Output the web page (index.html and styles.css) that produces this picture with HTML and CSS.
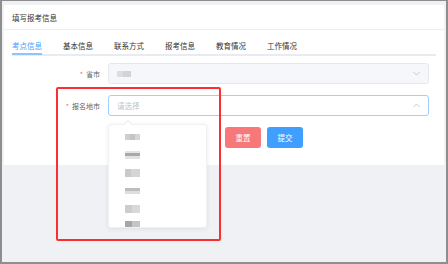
FILE: index.html
```
<!DOCTYPE html>
<html lang="zh-CN">
<head>
    <meta charset="UTF-8">
    <meta name="viewport" content="width=device-width, initial-scale=1.0">
    <title>填写报考信息</title>
    <link rel="stylesheet" href="styles.css">
</head>
<body>
    <div class="frame">
        <div class="card">
            <div class="card-title">填写报考信息</div>

            <!-- Tabs -->
            <div class="tabs">
                <span class="tab active">考点信息</span>
                <span class="tab">基本信息</span>
                <span class="tab">联系方式</span>
                <span class="tab">报考信息</span>
                <span class="tab">教育情况</span>
                <span class="tab">工作情况</span>
            </div>

            <!-- Form -->
            <form class="form">
                <div class="row">
                    <label class="label"><i class="req">*</i>省市</label>
                    <div class="select disabled">
                        <span class="mosaic m0"></span>
                        <svg class="arrow" width="7" height="5" viewBox="0 0 7 5"><polyline points="0.5,1 3.5,4 6.5,1" fill="none" stroke="#c0c4cc" stroke-width="0.9"/></svg>
                    </div>
                </div>
                <div class="row">
                    <label class="label"><i class="req">*</i>报名地市</label>
                    <div class="select focus">
                        <span class="placeholder">请选择</span>
                        <svg class="arrow" width="7" height="5" viewBox="0 0 7 5"><polyline points="0.5,4 3.5,1 6.5,4" fill="none" stroke="#c0c4cc" stroke-width="0.9"/></svg>

                        <div class="dropdown">
                            <span class="caret"></span>
                            <div class="option"><span class="mosaic m1"></span></div>
                            <div class="option"><span class="mosaic m2"></span></div>
                            <div class="option"><span class="mosaic m3"></span></div>
                            <div class="option"><span class="mosaic m4"></span></div>
                            <div class="option"><span class="mosaic m5"></span></div>
                            <div class="option"><span class="mosaic m6"></span></div>
                        </div>
                    </div>
                </div>
                <div class="actions">
                    <button type="button" class="btn reset">重置</button>
                    <button type="button" class="btn submit">提交</button>
                </div>
            </form>
        </div>

        <!-- red highlight box -->
        <div class="highlight"></div>
    </div>
</body>
</html>
```

FILE: styles.css
```
* {
    box-sizing: border-box;
}
body {
    margin: 0;
    font-family: "Noto Sans CJK SC", "Noto Sans", sans-serif;
    color: #303133;
}
.frame {
    position: relative;
    width: 448px;
    height: 264px;
    border: 2px solid #8e8e8e;
    border-top-width: 1px;
    background: #eff1f5;
    padding: 4px 2px 0 2px;
    overflow: hidden;
}
.card {
    background: #fff;
    padding-bottom: 17px;
}
.card-title {
    height: 25px;
    padding: 0 8px;
    font-size: 7.5px;
    line-height: 25px;
    color: #303133;
    border-bottom: 1px solid #ebeef5;
}
.tabs {
    display: flex;
    margin: 0 8px;
    border-bottom: 2px solid #e9ebf0;
}
.tab {
    margin-right: 21px;
    padding: 10px 0 2px;
    font-size: 7.5px;
    line-height: 11px;
    color: #303133;
    border-bottom: 2px solid transparent;
    margin-bottom: -1px;
}
.tab.active {
    color: #409eff;
    border-bottom-color: #8cc5ff;
}
.form {
    margin-top: 7px;
}
.row {
    display: flex;
    align-items: center;
    margin-bottom: 11px;
}
.label {
    width: 104px;
    padding-right: 8px;
    text-align: right;
    font-size: 7px;
    color: #606266;
}
.req {
    font-style: normal;
    color: #f56c6c;
    margin-right: 3px;
}
.select {
    position: relative;
    display: flex;
    align-items: center;
    width: 321px;
    height: 21px;
    padding: 0 8px;
    border: 1px solid #e4e7ed;
    border-radius: 3px;
    font-size: 7.5px;
}
.select.disabled {
    background: #f5f7fa;
}
.select.focus {
    border-color: #a3cdfb;
}
.placeholder {
    color: #c0c4cc;
}
.arrow {
    margin-left: auto;
}
.mosaic {
    display: inline-block;
    width: 15px;
    height: 6px;
    filter: blur(0.6px);
}
.m0 {
    width: 14px;
    background: linear-gradient(90deg, #dcdde0 0 40%, #d2d3d6 40% 100%);
}
.m1 {
    background: linear-gradient(90deg, #cfcfcf 0 35%, #c4c4c4 35% 70%, #d6d6d6 70%);
}
.m2 {
    height: 8px;
    background: linear-gradient(#e4e4e4 0 30%, #a9a9a9 30% 65%, #e2e2e2 65%);
}
.m3 {
    height: 8px;
    background: linear-gradient(90deg, #c9c9c9 0 40%, #d5d5d5 40%);
}
.m4 {
    background: linear-gradient(#bdbdbd 0 50%, #dedede 50%);
}
.m5 {
    height: 8px;
    background: linear-gradient(90deg, #cdcdcd 0 50%, #d9d9d9 50%);
}
.m6 {
    background: linear-gradient(90deg, #a6a6a6 0 50%, #c4c4c4 50%);
}
.dropdown {
    position: absolute;
    top: 28px;
    left: -1px;
    width: 99px;
    height: 104px;
    padding-top: 3px;
    background: #fff;
    border: 1px solid #f0f1f3;
    border-radius: 3px;
    box-shadow: 0 1px 5px rgba(0, 0, 0, 0.08);
    z-index: 2;
}
.options {
    overflow: hidden;
}
.caret {
    position: absolute;
    top: -4px;
    left: 16px;
    width: 6px;
    height: 6px;
    background: #fff;
    border-left: 1px solid #eceef2;
    border-top: 1px solid #eceef2;
    transform: rotate(45deg);
}
.option {
    height: 18px;
    padding-left: 16px;
    display: flex;
    align-items: center;
    overflow: hidden;
}
.dropdown .option:last-child {
    height: 9px;
    align-items: flex-end;
}
.actions {
    display: flex;
    gap: 6px;
    margin-left: 221px;
}
.btn {
    width: 36px;
    height: 21px;
    border: none;
    border-radius: 3px;
    color: #fff;
    font-family: "Noto Sans CJK SC", sans-serif;
    font-size: 7.5px;
    padding: 0;
}
.reset {
    background: #f67878;
}
.submit {
    background: #409eff;
}
.highlight {
    position: absolute;
    left: 54px;
    top: 86px;
    width: 165px;
    height: 154px;
    border: 2px solid #ff2e2e;
    border-radius: 2px;
    z-index: 3;
}
```
